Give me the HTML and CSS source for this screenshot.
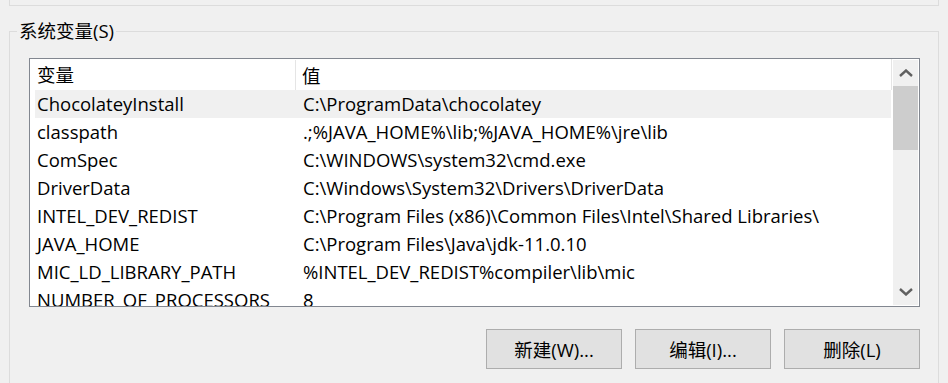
FILE: index.html
```html
<!DOCTYPE html>
<html lang="zh-CN">
<head>
    <meta charset="UTF-8">
    <meta name="viewport" content="width=device-width, initial-scale=1.0">
    <title>环境变量</title>
    <link rel="stylesheet" href="styles.css">
</head>
<body>
    <div class="prev-group"></div>

    <fieldset class="group">
        <legend>系统变量(S)</legend>

        <div class="list">
            <div class="table">
                <div class="head">
                    <div class="col-name">变量</div>
                    <div class="col-value">值</div>
                </div>
                <div class="rows">
                    <div class="row hover">
                        <div class="name">ChocolateyInstall</div>
                        <div class="value">C:\ProgramData\chocolatey</div>
                    </div>
                    <div class="row">
                        <div class="name">classpath</div>
                        <div class="value">.;%JAVA_HOME%\lib;%JAVA_HOME%\jre\lib</div>
                    </div>
                    <div class="row">
                        <div class="name">ComSpec</div>
                        <div class="value">C:\WINDOWS\system32\cmd.exe</div>
                    </div>
                    <div class="row">
                        <div class="name">DriverData</div>
                        <div class="value">C:\Windows\System32\Drivers\DriverData</div>
                    </div>
                    <div class="row">
                        <div class="name">INTEL_DEV_REDIST</div>
                        <div class="value">C:\Program Files (x86)\Common Files\Intel\Shared Libraries\</div>
                    </div>
                    <div class="row">
                        <div class="name">JAVA_HOME</div>
                        <div class="value">C:\Program Files\Java\jdk-11.0.10</div>
                    </div>
                    <div class="row">
                        <div class="name">MIC_LD_LIBRARY_PATH</div>
                        <div class="value">%INTEL_DEV_REDIST%compiler\lib\mic</div>
                    </div>
                    <div class="row">
                        <div class="name">NUMBER_OF_PROCESSORS</div>
                        <div class="value">8</div>
                    </div>
                </div>
            </div>

            <div class="scrollbar">
                <div class="arrow">
                    <svg width="14" height="8" viewBox="0 0 14 8"><polyline points="1,7 7,1.5 13,7" fill="none" stroke="#606060" stroke-width="2.4"/></svg>
                </div>
                <div class="thumb"></div>
                <div class="track"></div>
                <div class="arrow">
                    <svg width="14" height="8" viewBox="0 0 14 8"><polyline points="1,1 7,6.5 13,1" fill="none" stroke="#606060" stroke-width="2.4"/></svg>
                </div>
            </div>
        </div>

        <div class="buttons">
            <button class="btn">新建(W)...</button>
            <button class="btn">编辑(I)...</button>
            <button class="btn">删除(L)</button>
        </div>
    </fieldset>
</body>
</html>
```

FILE: styles.css
```css
* {
    margin: 0;
    padding: 0;
    box-sizing: border-box;
}

body {
    width: 948px;
    height: 383px;
    overflow: hidden;
    background-color: #f0f0f0;
    color: #000;
    font-family: "Open Sans", "Noto Sans CJK SC", sans-serif;
    font-size: 18.5px;
}

.prev-group {
    width: 930px;
    height: 6px;
    margin-left: 9px;
    border: 1px solid #dcdcdc;
    border-top: none;
}

/* group box runs past the bottom of the window */
.group {
    width: 930px;
    height: 377px;
    margin: 14px 0 0 9px;
    border: 1px solid #dcdcdc;
    border-bottom: none;
    padding: 0;
}
.group legend {
    margin-left: 7px;
    padding: 0 2px;
    line-height: 22px;
}

.list {
    display: flex;
    width: 891px;
    height: 249px;
    margin: 16px 0 0 19px;
    border: 1px solid #828790;
    background-color: #fff;
}
.table {
    flex: 1;
    overflow: hidden;
}
.head {
    display: flex;
    height: 31px;
    align-items: center;
    border-right: 1px solid #e5e5e5;
}
.col-name {
    width: 266px;
    height: 30px;
    line-height: 30px;
    padding-left: 7px;
    border-right: 1px solid #e5e5e5;
}
.col-value {
    padding-left: 6px;
}

.rows {
    height: 216px;
    overflow: hidden;
}
.row {
    display: grid;
    grid-template-columns: 261px 1fr;
    height: 28px;
    line-height: 28px;
    margin: 0 1px 0 5px;
    white-space: nowrap;
}
.row.hover {
    background-color: #f0f0f0;
}
.name {
    padding-left: 2px;
}
.value {
    padding-left: 7px;
}

.scrollbar {
    display: flex;
    flex-direction: column;
    width: 25px;
    margin: 1px;
    background-color: #f0f0f0;
}
.arrow {
    display: flex;
    height: 26px;
    align-items: center;
    justify-content: center;
}
.thumb {
    height: 64px;
    background-color: #cdcdcd;
}
.track {
    flex: 1;
}

.buttons {
    display: flex;
    justify-content: flex-end;
    gap: 13px;
    margin: 22px 18px 0 0;
}
.btn {
    width: 136px;
    height: 40px;
    border: 1px solid #adadad;
    background-color: #e1e1e1;
    color: #000;
    font-family: inherit;
    font-size: 18.5px;
}
```
